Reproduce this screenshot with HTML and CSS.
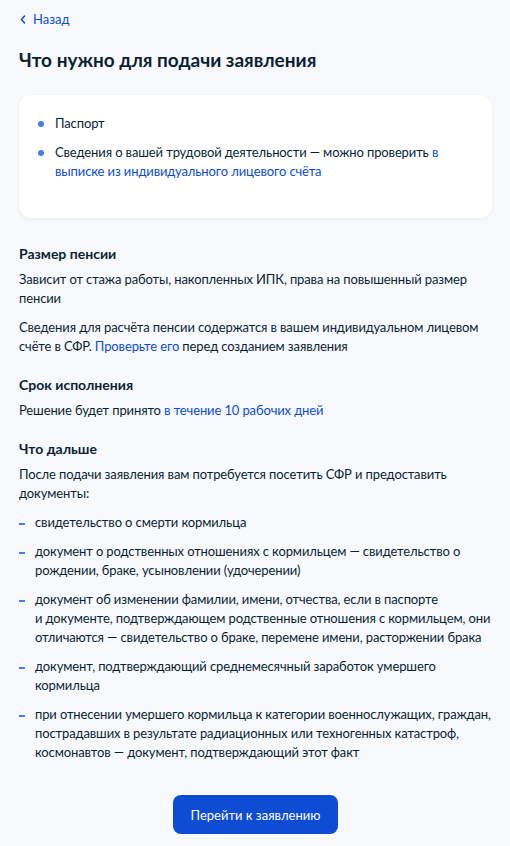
FILE: index.html
```html
<!DOCTYPE html>
<html lang="ru">
<head>
<meta charset="utf-8">
<link rel="stylesheet" href="styles.css">
</head>
<body>
<div class="page">
  <a class="back" href="#"><svg class="chev" width="6" height="9" viewBox="0 0 6 9"><path d="M4.5 1 1.5 4.5 4.5 8" fill="none" stroke="currentColor" stroke-width="1.5" stroke-linecap="round" stroke-linejoin="round"/></svg>Назад</a>
  <h1 class="title">Что нужно для подачи заявления</h1>
  <div class="card">
    <ul class="dots">
      <li>Паспорт</li>
      <li>Сведения о вашей трудовой деятельности — можно проверить <a href="#">в выписке из индивидуального лицевого счёта</a></li>
    </ul>
  </div>
  <section class="sec">
    <h2>Размер пенсии</h2>
    <p>Зависит от стажа работы, накопленных ИПК, права на повышенный размер пенсии</p>
    <p>Сведения для расчёта пенсии содержатся в вашем индивидуальном лицевом счёте в СФР. <a href="#">Проверьте его</a> перед созданием заявления</p>
  </section>
  <section class="sec">
    <h2>Срок исполнения</h2>
    <p>Решение будет принято <a href="#">в течение 10 рабочих дней</a></p>
  </section>
  <section class="sec">
    <h2>Что дальше</h2>
    <p>После подачи заявления вам потребуется посетить СФР и предоставить документы:</p>
    <ul class="dashes">
      <li>свидетельство о смерти кормильца</li>
      <li>документ о родственных отношениях с кормильцем — свидетельство о рождении, браке, усыновлении (удочерении)</li>
      <li>документ об изменении фамилии, имени, отчества, если в паспорте<br>и&nbsp;документе, подтверждающем родственные отношения с кормильцем, они отличаются — свидетельство о браке, перемене имени, расторжении брака</li>
      <li>документ, подтверждающий среднемесячный заработок умершего кормильца</li>
      <li>при отнесении умершего кормильца к категории военнослужащих, граждан, пострадавших в результате радиационных или техногенных катастроф, космонавтов — документ, подтверждающий этот факт</li>
    </ul>
  </section>
  <div class="actions">
    <button class="btn">Перейти к заявлению</button>
  </div>
</div>
</body>
</html>
```
FILE: styles.css
```css
* { box-sizing: border-box; }
html, body { margin: 0; padding: 0; }
body {
  background: #f8f9fd;
  font-family: Lato, "Noto Sans", sans-serif;
  color: #0b1f33;
  font-size: 13px;
  line-height: 19px;
}
a { color: #0d4cd3; text-decoration: none; }
.page { padding: 10px 18px 0 19px; }
.back {
  display: inline-flex;
  align-items: center;
  gap: 7px;
  font-size: 13px;
  line-height: 19px;
}
.chev { margin-left: 1px; }
.title {
  margin: 19px 0 0;
  font-size: 19px;
  line-height: 24px;
  font-weight: 700;
}
.card {
  margin-top: 23px;
  background: #fff;
  border-radius: 12px;
  box-shadow: 0 1px 4px rgba(11, 31, 51, 0.06);
  padding: 19px 20px 37px 18px;
  height: 123px;
  letter-spacing: -0.12px;
}
.dots { list-style: none; margin: 0; padding: 0; }
.dots li {
  position: relative;
  padding-left: 18px;
  margin-bottom: 10px;
}
.dots li::before {
  content: "";
  position: absolute;
  left: 1px;
  top: 7px;
  width: 6px;
  height: 6px;
  border-radius: 50%;
  background: #4b79f2;
}
.sec { margin-top: 26px; }
.sec + .sec { margin-top: 19px; }
.sec h2 {
  margin: 0 0 6px;
  font-size: 14px;
  line-height: 20px;
  font-weight: 700;
}
.sec p { margin: 0 0 10px; letter-spacing: -0.12px; }
.dashes { list-style: none; margin: 0; padding: 0; letter-spacing: -0.12px; }
.dashes li {
  position: relative;
  padding-left: 16px;
  margin-bottom: 10px;
}
.dashes li::before {
  content: "";
  position: absolute;
  left: 0;
  top: 10px;
  width: 6px;
  height: 2px;
  background: #4b79f2;
}
.actions {
  display: flex;
  justify-content: center;
  margin-top: 33px;
}
.btn {
  width: 165px;
  height: 39px;
  border: 0;
  border-radius: 8px;
  background: #0d4cd3;
  color: #fff;
  font-family: Lato, "Noto Sans", sans-serif;
  font-size: 13px;
}
```
